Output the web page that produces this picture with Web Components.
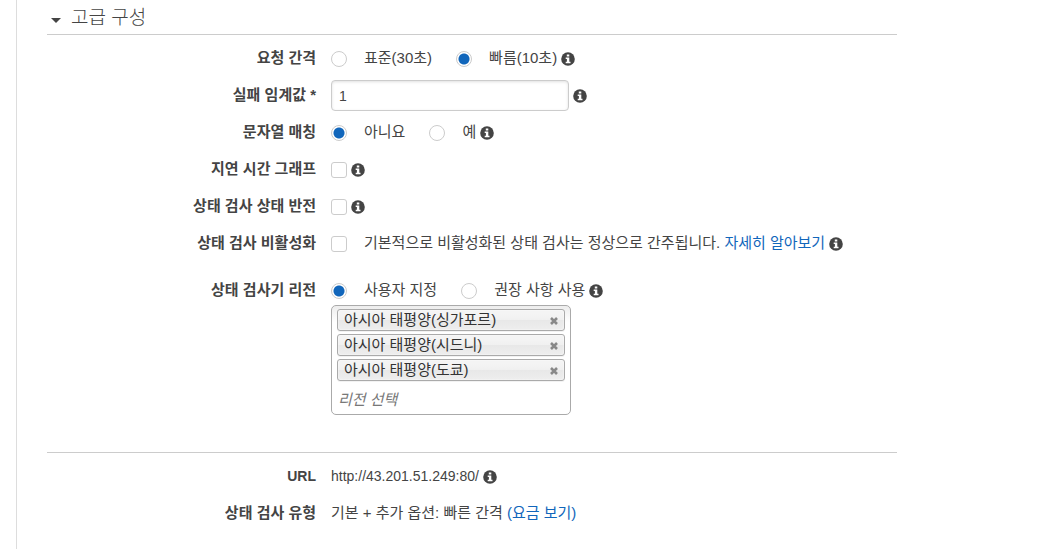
<!DOCTYPE html>
<html lang="ko">
<head>
<meta charset="utf-8">
<title>고급 구성</title>
<style>
html, body { height: 100%; }
body { margin: 0; background: #fff; color: #444; font: 15px/20px "Liberation Sans", "Noto Sans CJK KR", sans-serif; }
</style>
</head>
<body>
<health-check-panel></health-check-panel>
<script>
const define = (name, html, setup) => customElements.define(name, class extends HTMLElement {
  constructor() {
    super();
    const template = document.createElement('template');
    template.innerHTML = html;
    this.attachShadow({ mode: 'open' }).append(template.content.cloneNode(true));
  }
  connectedCallback() { if (setup) setup(this, this.shadowRoot); }
});

define('info-tip', `
<style>
:host { display: inline-flex; margin-top: 2px; }
button { display: flex; padding: 0; border: 0; background: none; color: inherit; cursor: pointer; }
svg { width: 14px; height: 14px; }
</style>
<button type="button" aria-label="정보"><svg viewBox="0 0 14 14" aria-hidden="true"><circle cx="7" cy="7" r="6.8" fill="currentColor"/><path fill="#fff" d="M5.8 2.4h2.5v2H5.8zM4.7 5.5h3.6v4.3h1.2v1.5H4.7V9.8h1.2V7H4.7z"/></svg></button>`);

define('form-row', `
<style>
:host { display: grid; grid-template-columns: minmax(120px, 269px) minmax(0, 1fr); column-gap: 15px; }
.label, .control { display: flex; align-items: center; min-height: 37px; }
.label { justify-content: flex-end; text-align: right; font-weight: bold; }
.control { gap: 4px; }
.below { grid-column: 2; }
</style>
<div class="label"><slot name="label"></slot></div>
<div class="control"><slot></slot></div>
<div class="below"><slot name="below"></slot></div>`);

define('region-tag', `
<style>
:host { display: flex; align-items: center; justify-content: space-between; box-sizing: border-box; height: 22px; padding: 0 5px 0 6px;
  border: 1px solid #aaa; border-radius: 3px; color: #333;
  background: linear-gradient(#f4f4f4 20%, #f0f0f0 50%, #e8e8e8 52%, #eee 100%); box-shadow: 0 0 2px #fff inset, 0 1px 0 rgba(0,0,0,.05); }
button { display: flex; margin-top: 2px; padding: 0; border: 0; background: none; cursor: pointer; }
svg { width: 10px; height: 10px; }
</style>
<span><slot></slot></span>
<button type="button" aria-label="제거"><svg viewBox="0 0 10 10" aria-hidden="true"><path d="M2 2l6 6M8 2l-6 6" stroke="#888" stroke-width="2.6"/></svg></button>`,
  (host, root) => root.querySelector('button').addEventListener('click', () => host.remove()));

define('region-picker', `
<style>
:host { display: flex; flex-direction: column; gap: 3px; box-sizing: border-box; max-width: 240px; margin-top: -3px; padding: 3px 5px 0;
  border: 1px solid #aaa; border-radius: 5px; background: linear-gradient(#eee 1%, #fff 15%); }
input { box-sizing: border-box; width: 100%; height: 30px; margin: 0; padding: 0 1px; border: 0; outline: 0; background: none; font: inherit; font-style: italic; color: #444; }
input::placeholder { color: #777; opacity: 1; }
</style>
<slot></slot>
<input type="text" aria-label="리전 선택" placeholder="리전 선택">`);

define('health-check-panel', `
<style>
:host { display: block; box-sizing: border-box; min-height: 100%; margin-left: 16px; padding: 0 30px; border-left: 1px solid #ddd; }
.content { max-width: 850px; }
h2 { margin: 0 0 4px; border-bottom: 1px solid #ccc; font-size: 19px; font-weight: 300; line-height: 32px; }
h2 button { display: flex; align-items: center; gap: 10px; box-sizing: border-box; width: 100%; height: 34px; padding: 2px 4px 0; border: 0; background: none; color: inherit; font: inherit; cursor: pointer; }
h2 svg { width: 10px; height: 5px; margin-top: 5px; fill: #444; }
a { color: #16b; text-decoration: none; }
.choices { display: flex; align-items: center; gap: 24px; }
.choice { display: flex; align-items: center; gap: 17px; }
input { margin: 2px 0 0; }
input[type=radio], input[type=checkbox] { appearance: none; flex: none; box-sizing: border-box; width: 16px; height: 16px; border: 1px solid #ccc; background: #fff; }
input[type=radio] { border-radius: 50%; }
input[type=checkbox] { border-radius: 3px; }
input[type=radio]:checked { background: radial-gradient(circle, #16b 0 5px, #fff 6px); background-origin: border-box; }
input[type=checkbox]:checked { background: #16b; }
input[type=text] { box-sizing: border-box; flex: 0 1 238px; min-width: 0; height: 31px; padding: 0 7px; border: 1px solid #ccc; border-radius: 4px; color: #444; font: inherit; font-size: 14px; box-shadow: inset 0 1px 3px rgba(0,0,0,.12); }
.spaced { margin-top: 10px; }
.summary { margin-top: 37px; padding-top: 4px; border-top: 1px solid #ccc; }
.latin { font-size: 14px; }
</style>
<div class="content">
  <h2><button type="button" aria-expanded="true"><svg viewBox="0 0 10 5" aria-hidden="true"><path d="M0 0h10L5 5z"/></svg>고급 구성</button></h2>
  <form>
    <form-row>
      <span slot="label" id="interval">요청 간격</span>
      <div class="choices" role="radiogroup" aria-labelledby="interval">
        <label class="choice"><input type="radio" name="interval"><span>표준(30초)</span></label>
        <label class="choice"><input type="radio" name="interval" checked><span>빠름(10초)</span></label>
      </div>
      <info-tip></info-tip>
    </form-row>
    <form-row>
      <label slot="label" for="threshold">실패 임계값 *</label>
      <input type="text" id="threshold" value="1">
      <info-tip></info-tip>
    </form-row>
    <form-row>
      <span slot="label" id="match">문자열 매칭</span>
      <div class="choices" role="radiogroup" aria-labelledby="match">
        <label class="choice"><input type="radio" name="match" checked><span>아니요</span></label>
        <label class="choice"><input type="radio" name="match"><span>예</span></label>
      </div>
      <info-tip></info-tip>
    </form-row>
    <form-row>
      <label slot="label" for="latency">지연 시간 그래프</label>
      <input type="checkbox" id="latency">
      <info-tip></info-tip>
    </form-row>
    <form-row>
      <label slot="label" for="invert">상태 검사 상태 반전</label>
      <input type="checkbox" id="invert">
      <info-tip></info-tip>
    </form-row>
    <form-row>
      <label slot="label" for="disable">상태 검사 비활성화</label>
      <div class="choice"><input type="checkbox" id="disable"><span>기본적으로 비활성화된 상태 검사는 정상으로 간주됩니다. <a href="#">자세히 알아보기</a></span></div>
      <info-tip></info-tip>
    </form-row>
    <form-row class="spaced">
      <span slot="label" id="regions">상태 검사기 리전</span>
      <div class="choices" role="radiogroup" aria-labelledby="regions">
        <label class="choice"><input type="radio" name="regions" checked><span>사용자 지정</span></label>
        <label class="choice"><input type="radio" name="regions"><span>권장 사항 사용</span></label>
      </div>
      <info-tip></info-tip>
      <region-picker slot="below">
        <region-tag>아시아 태평양(싱가포르)</region-tag>
        <region-tag>아시아 태평양(시드니)</region-tag>
        <region-tag>아시아 태평양(도쿄)</region-tag>
      </region-picker>
    </form-row>
  </form>
  <div class="summary">
    <form-row class="latin">
      <span slot="label">URL</span>
      <span>http://43.201.51.249:80/</span>
      <info-tip></info-tip>
    </form-row>
    <form-row>
      <span slot="label">상태 검사 유형</span>
      <span>기본 + 추가 옵션: 빠른 간격 <a href="#">(요금 보기)</a></span>
    </form-row>
  </div>
</div>`, (host, root) => {
  const toggle = root.querySelector('h2 button');
  toggle.addEventListener('click', () => {
    const form = root.querySelector('form');
    form.hidden = !form.hidden;
    toggle.setAttribute('aria-expanded', String(!form.hidden));
  });
});
</script>
</body>
</html>
